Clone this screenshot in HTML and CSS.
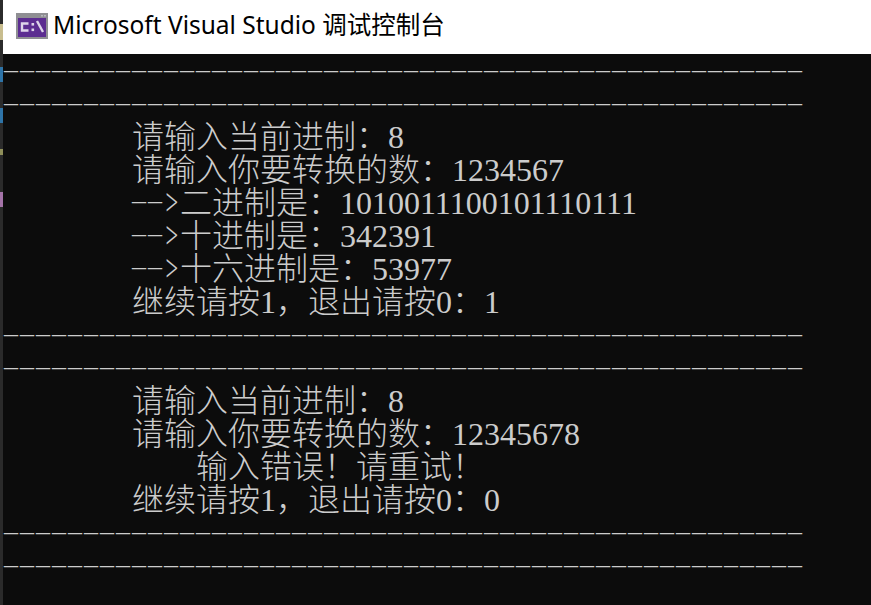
FILE: index.html
```html
<!DOCTYPE html>
<html lang="zh-CN">
<head>
<meta charset="utf-8">
<title>Microsoft Visual Studio 调试控制台</title>
<link rel="stylesheet" href="styles.css">
</head>
<body>
<div class="window">
  <div class="strip">
    <i class="bit bit-a"></i>
    <i class="bit bit-b"></i>
    <i class="bit bit-c"></i>
    <i class="bit bit-d"></i>
    <i class="bit bit-e"></i>
  </div>
  <div class="main">
    <header class="titlebar">
      <svg class="icon" viewBox="0 0 32 26" width="32" height="26" aria-hidden="true">
        <rect width="32" height="26" fill="#8f8f93"/>
        <rect x="2" y="5" width="28" height="19" fill="#5c2d91"/>
        <rect x="25" y="2" width="2" height="1.5" fill="#b9b9bd"/>
        <rect x="28" y="2" width="2" height="1.5" fill="#b9b9bd"/>
        <path d="M12.5 10.5H6V17.5H12.5" fill="none" stroke="#ded5ea" stroke-width="2.4"/>
        <rect x="15.5" y="10" width="2.6" height="2.6" fill="#ded5ea"/>
        <rect x="15.5" y="15.5" width="2.6" height="2.6" fill="#ded5ea"/>
        <path d="M21 8L27 19" fill="none" stroke="#ded5ea" stroke-width="2.4"/>
      </svg>
      <span class="title">Microsoft Visual Studio 调试控制台</span>
    </header>
    <main class="console">
      <div class="row rule">––––––––––––––––––––––––––––––––––––––––––––––––––</div>
      <div class="row rule">––––––––––––––––––––––––––––––––––––––––––––––––––</div>
      <div class="row indent"><span class="zh">请输入当前进制：</span>8</div>
      <div class="row indent"><span class="zh">请输入你要转换的数：</span>1234567</div>
      <div class="row indent"><span class="rule dash">––</span><span class="gt">&gt;</span><span class="zh">二进制是：</span>1010011100101110111</div>
      <div class="row indent"><span class="rule dash">––</span><span class="gt">&gt;</span><span class="zh">十进制是：</span>342391</div>
      <div class="row indent"><span class="rule dash">––</span><span class="gt">&gt;</span><span class="zh">十六进制是：</span>53977</div>
      <div class="row indent"><span class="zh">继续请按</span>1<span class="zh">，退出请按</span>0<span class="zh">：</span>1</div>
      <div class="row rule">––––––––––––––––––––––––––––––––––––––––––––––––––</div>
      <div class="row rule">––––––––––––––––––––––––––––––––––––––––––––––––––</div>
      <div class="row indent"><span class="zh">请输入当前进制：</span>8</div>
      <div class="row indent"><span class="zh">请输入你要转换的数：</span>12345678</div>
      <div class="row indent-deep"><span class="zh">输入错误！请重试！</span></div>
      <div class="row indent"><span class="zh">继续请按</span>1<span class="zh">，退出请按</span>0<span class="zh">：</span>0</div>
      <div class="row rule">––––––––––––––––––––––––––––––––––––––––––––––––––</div>
      <div class="row rule">––––––––––––––––––––––––––––––––––––––––––––––––––</div>
    </main>
  </div>
</div>
</body>
</html>
```
FILE: styles.css
```css
html, body {
  margin: 0;
  height: 100%;
  overflow: hidden;
  background: #0c0c0c;
}
.window {
  display: flex;
  height: 605px;
}
.strip {
  width: 3px;
  flex: none;
  background: #2b2b2b;
  display: flex;
  flex-direction: column;
}
.bit { display: block; width: 3px; }
.bit-a { margin-top: 24px; height: 16px; background: #c8bd8e; }
.bit-b { margin-top: 27px; height: 15px; background: #2e74a8; }
.bit-c { margin-top: 26px; height: 15px; background: #2e74a8; }
.bit-d { margin-top: 26px; height: 6px; background: #8f8f5a; }
.bit-e { margin-top: 37px; height: 15px; background: #a473a8; }
.main {
  flex: 1;
  min-width: 0;
  display: flex;
  flex-direction: column;
}
.titlebar {
  height: 54px;
  flex: none;
  background: #fff;
  display: flex;
  align-items: center;
  padding-left: 13px;
  gap: 6px;
}
.icon { flex: none; margin-top: -2px; }
.title {
  font-family: "Noto Sans", "Noto Sans CJK SC", sans-serif;
  font-size: 24.5px;
  line-height: 32px;
  color: #000;
  white-space: pre;
  margin-top: -5px;
  margin-left: -1px;
}
.console {
  flex: 1;
  background: #0c0c0c;
  padding-left: 1px;
  color: #cccccc;
  font-family: "Liberation Serif", serif;
  font-size: 32px;
}
.row {
  height: 33px;
  line-height: 29px;
  white-space: pre;
}
.indent { padding-left: 128px; }
.indent-deep { padding-left: 192px; }
.zh {
  font-family: "Noto Sans CJK SC", sans-serif;
  font-size: 32px;
  font-weight: 200;
}
.rule {
  font-size: 28px;
  letter-spacing: 2px;
}
.dash {
  position: relative;
  top: -5px;
}
.gt {
  display: inline-block;
  width: 16px;
  font-size: 28px;
  transform: translateY(-2px) scale(0.8, 1.35);
}
```
